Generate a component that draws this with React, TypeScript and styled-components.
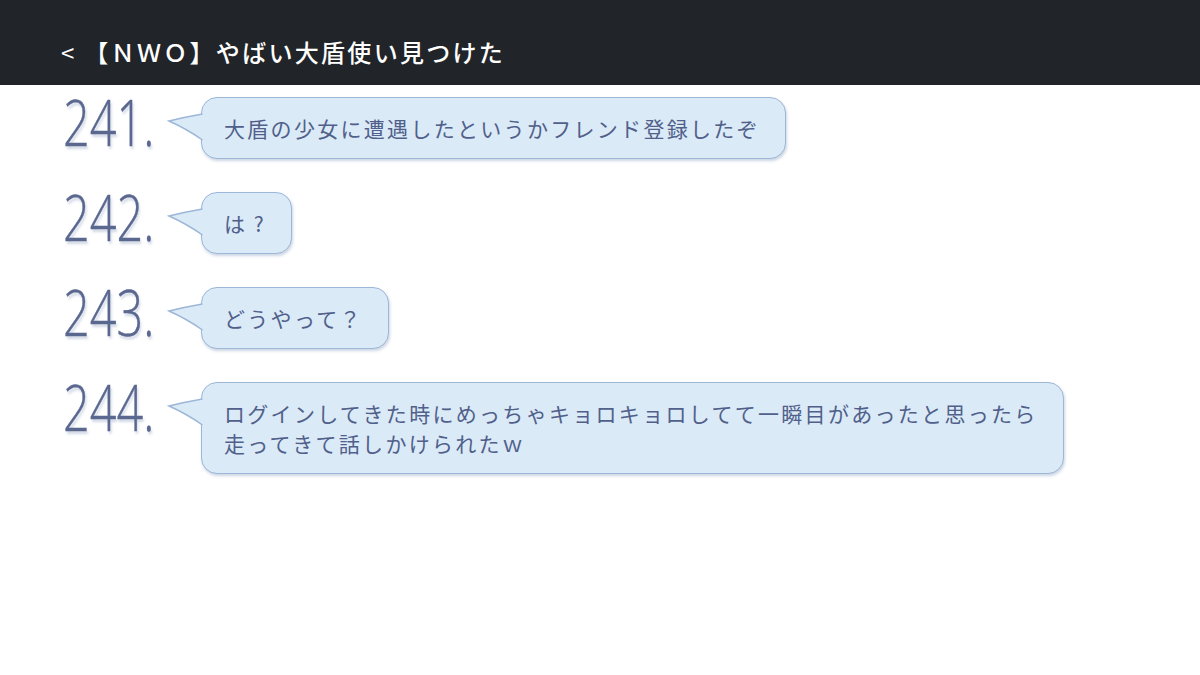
import React from "react";
import styled, { createGlobalStyle } from "styled-components";

const GlobalStyle = createGlobalStyle`
  html, body {
    margin: 0;
    padding: 0;
    background: #ffffff;
  }
  body {
    font-family: "Noto Sans CJK JP", "Noto Sans", sans-serif;
  }
`;

const Page = styled.div`
  width: 1200px;
  height: 675px;
  overflow: hidden;
  background: #ffffff;
`;

const Header = styled.header`
  height: 85px;
  box-sizing: border-box;
  padding: 18px 0 0 61px;
  background: #212428;
  display: flex;
  align-items: center;
  color: #ffffff;
  font-family: "Noto Sans CJK JP", sans-serif;
  font-size: 24px;
  font-weight: 500;
  letter-spacing: 2.3px;
`;

const Back = styled.span`
  font-size: 24px;
  font-weight: 400;
  letter-spacing: 0;
  margin-right: 10px;
`;

const Thread = styled.main`
  display: flex;
  flex-direction: column;
  gap: 33px;
  padding: 12px 0 0 63px;
`;

const Row = styled.div`
  display: flex;
  align-items: flex-start;
`;

const NumberCell = styled.div`
  width: 138px;
  flex-shrink: 0;
  height: 60px;
`;

const Num = styled.span`
  display: inline-block;
  margin-top: -8px;
  font-family: "Open Sans", "Lato", sans-serif;
  font-weight: 300;
  font-size: 65px;
  line-height: 65px;
  color: #5a6890;
  transform: scaleX(0.72);
  transform-origin: left top;
  -webkit-text-stroke: 0.4px #5a6890;
  text-shadow: 2px 3px 3px rgba(120, 140, 180, 0.35);
`;

const Bubble = styled.div`
  position: relative;
  box-sizing: border-box;
  padding: 15px 25px 15px 22px;
  background: #dbeaf7;
  border: 1.5px solid #9db7d8;
  border-radius: 16px;
  box-shadow: 1px 2px 3px rgba(110, 135, 175, 0.35);
  color: #50608a;
  font-family: "Noto Sans CJK JP", sans-serif;
  font-size: 21px;
  line-height: 30px;
  letter-spacing: 2.3px;
  white-space: nowrap;
`;

const Tail = styled.svg`
  position: absolute;
  left: -35px;
  top: 13px;
  overflow: visible;
`;

const BubbleTail = () => (
  <Tail width="38" height="32" viewBox="0 0 38 32">
    <path d="M38 3 L35 3 Q18 6 2 10 Q20 18 35 29 L38 29 Z" fill="#dbeaf7" />
    <path
      d="M35.5 3 Q18 6 2 10 Q20 18 35.5 29"
      fill="none"
      stroke="#9db7d8"
      strokeWidth="1.5"
    />
  </Tail>
);

type Post = { no: number; lines: string[] };

const posts: Post[] = [
  { no: 241, lines: ["大盾の少女に遭遇したというかフレンド登録したぞ"] },
  { no: 242, lines: ["は\u2009?"] },
  { no: 243, lines: ["どうやって？"] },
  {
    no: 244,
    lines: [
      "ログインしてきた時にめっちゃキョロキョロしてて一瞬目があったと思ったら",
      "走ってきて話しかけられたｗ",
    ],
  },
];

const App: React.FC = () => {
  return (
    <Page>
      <GlobalStyle />
      <Header>
        <Back>&lt;</Back>
        【ＮＷＯ】やばい大盾使い見つけた
      </Header>
      <Thread>
        {posts.map((p) => (
          <Row key={p.no}>
            <NumberCell>
              <Num>{p.no}.</Num>
            </NumberCell>
            <Bubble>
              <BubbleTail />
              {p.lines.map((l, i) => (
                <div key={i}>{l}</div>
              ))}
            </Bubble>
          </Row>
        ))}
      </Thread>
    </Page>
  );
};

export default App;
